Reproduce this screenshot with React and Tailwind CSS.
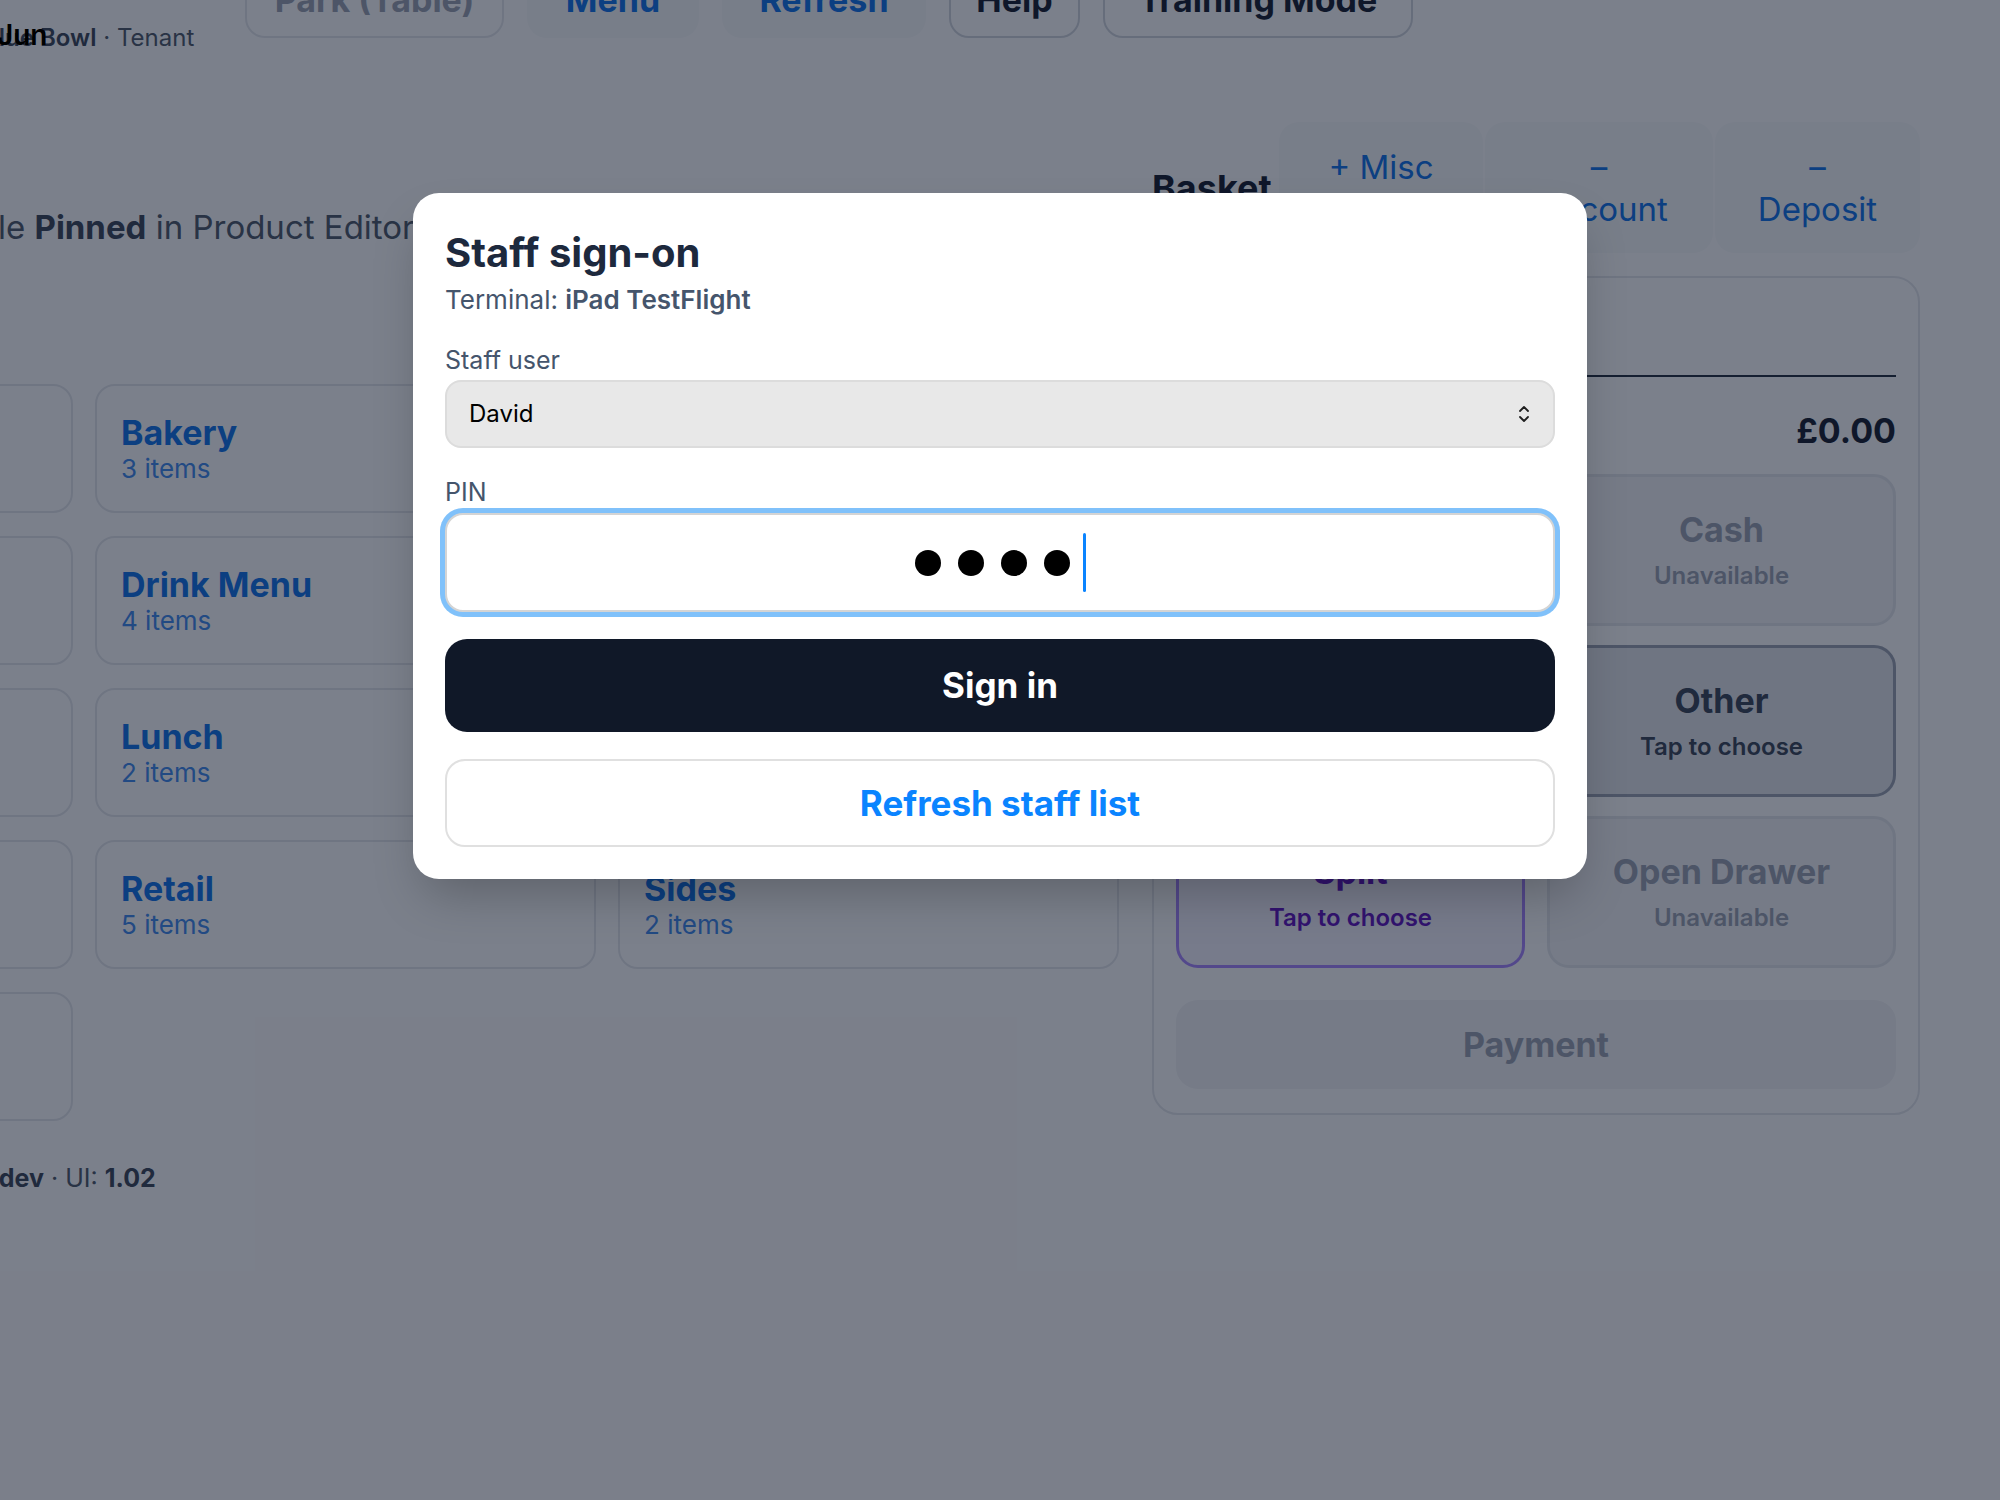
import { useState } from "react";

const categoryRows = [
  [{ name: "Specials", count: 2 }, { name: "Bakery", count: 3 }, { name: "Breakfast", count: 6 }],
  [{ name: "Coffee", count: 8 }, { name: "Drink Menu", count: 4 }, { name: "Hot Food", count: 5 }],
  [{ name: "Desserts", count: 3 }, { name: "Lunch", count: 2 }, { name: "Salads", count: 4 }],
  [{ name: "Kids", count: 3 }, { name: "Retail", count: 5 }, { name: "Sides", count: 2 }],
  [{ name: "Soft Drinks", count: 7 }],
];

function CategoryCard({ name, count }) {
  return (
    <div className="flex h-[129px] flex-col justify-center rounded-[20px] border-2 border-gray-200 bg-white px-6">
      <div className="text-[34px] font-bold leading-[38px] text-[#0a6fe8]">{name}</div>
      <div className="mt-0.5 text-[26px] leading-[30px] text-[#3b87ee]">{count} items</div>
    </div>
  );
}

function TenderTile({ title, sub, variant }) {
  const styles = {
    disabled: "border-gray-200 bg-gray-100 text-gray-400",
    active: "border-gray-400 bg-gray-200 text-gray-700",
    split: "border-violet-400 bg-violet-50 text-violet-800",
  };
  return (
    <div
      className={`flex h-[152px] flex-col items-center justify-center rounded-[22px] border-[3px] ${styles[variant]}`}
    >
      <div className="text-[34px] font-bold leading-[40px]">{title}</div>
      <div className="mt-3 text-[24px] font-semibold leading-[28px]">{sub}</div>
    </div>
  );
}

function ChevronUpDown() {
  return (
    <svg width="14" height="22" viewBox="0 0 14 22" fill="none" stroke="#1f1f1f" strokeWidth="1.8" strokeLinecap="round" strokeLinejoin="round">
      <path d="M3 8 L7 4 L11 8" />
      <path d="M3 14 L7 18 L11 14" />
    </svg>
  );
}

function StaffSignOn() {
  const [staff, setStaff] = useState("David");
  return (
    <div className="w-[1174px] rounded-[26px] bg-white px-8 pb-8 pt-[38px] shadow-2xl">
      <h2 className="text-[40px] font-bold leading-[44px] text-slate-800">Staff sign-on</h2>
      <p className="mt-2.5 text-[26px] leading-[30px] text-slate-600">
        Terminal: <span className="font-semibold">iPad TestFlight</span>
      </p>

      <label className="mt-[30px] block text-[25px] leading-[30px] text-slate-600">Staff user</label>
      <div className="relative mt-[5px]">
        <select
          value={staff}
          onChange={(e) => setStaff(e.target.value)}
          className="h-[68px] w-full appearance-none rounded-2xl border-2 border-[#dcdcdc] bg-[#e8e8e8] pl-[22px] text-[24px] text-black outline-none"
        >
          <option>David</option>
          <option>Sarah</option>
          <option>Tom</option>
        </select>
        <div className="pointer-events-none absolute right-[24px] top-[23px]">
          <ChevronUpDown />
        </div>
      </div>

      <label className="mt-[29px] block text-[25px] leading-[30px] text-slate-600">PIN</label>
      <div className="mt-[6px] flex h-[99px] items-center justify-center rounded-[18px] border-2 border-[#d4d4d4] bg-white ring-[5px] ring-[#80c1fa]">
        <div className="flex items-center gap-[17px]">
          <span className="h-[26px] w-[26px] rounded-full bg-black" />
          <span className="h-[26px] w-[26px] rounded-full bg-black" />
          <span className="h-[26px] w-[26px] rounded-full bg-black" />
          <span className="h-[26px] w-[26px] rounded-full bg-black" />
          <span className="ml-[-4px] h-[59px] w-[3px] rounded-full bg-[#0a84ff]" />
        </div>
      </div>

      <button className="mt-[27px] flex h-[93px] w-full items-center justify-center rounded-[22px] bg-gray-900 text-[35px] font-bold text-white">
        Sign in
      </button>
      <button className="mt-[27px] flex h-[88px] w-full items-center justify-center rounded-[20px] border-2 border-[#e0e0e0] bg-white text-[35px] font-bold text-[#0a84ff]">
        Refresh staff list
      </button>
    </div>
  );
}

export default function App() {
  const topButtons = [
    { label: "Park (Table)", w: "w-[259px]", cls: "border-2 border-gray-200 bg-white text-gray-400" },
    { label: "Menu", w: "w-[172px]", cls: "border-2 border-transparent bg-gray-50 text-[#0a6fe8]" },
    { label: "Refresh", w: "w-[204px]", cls: "border-2 border-transparent bg-gray-50 text-[#0a6fe8]" },
    { label: "Help", w: "w-[131px]", cls: "border-2 border-gray-300 bg-white text-gray-900" },
    { label: "Training Mode", w: "w-[310px]", cls: "border-2 border-gray-300 bg-white text-gray-900" },
  ];

  return (
    <div className="relative h-[1500px] w-[2000px] overflow-hidden bg-white font-['Inter',sans-serif]">
      {/* page under the dialog */}
      <div className="-mt-[56px] flex h-[94px] items-start gap-[23px]">
        <div className="mt-[79px] w-[222px]">
          <div className="-ml-[17px] whitespace-nowrap text-[24px] leading-[30px] text-gray-600">
            <span className="font-semibold text-gray-700">Blue Bowl</span> · Tenant
          </div>
        </div>
        {topButtons.map((b) => (
          <div
            key={b.label}
            className={`flex h-[94px] items-center justify-center rounded-[20px] pt-[17px] text-[34px] font-bold ${b.w} ${b.cls}`}
          >
            {b.label}
          </div>
        ))}
      </div>

      <div className="-ml-[428px] mt-[84px] flex gap-[33px]">
        <div className="w-[1547px] shrink-0">
          <p className="ml-[347px] mt-[85px] whitespace-nowrap text-[33px] leading-[40px] text-gray-600">
            Toggle <span className="font-bold text-gray-700">Pinned</span> in Product Editor to show categories here
          </p>
          <div className="mt-[137px] grid grid-cols-3 gap-x-[22px] gap-y-[23px]">
            {categoryRows.flat().map((c) => (
              <CategoryCard key={c.name} name={c.name} count={c.count} />
            ))}
          </div>
          <p className="ml-[354px] mt-[42px] whitespace-nowrap text-[25px] leading-[30px] text-gray-600">
            Build: <span className="font-bold text-gray-700">dev</span> · UI: <span className="font-bold text-gray-700">1.02</span>
          </p>
        </div>

        <div className="w-[768px] shrink-0">
          <div className="flex items-center justify-between">
            <h3 className="text-[36px] font-bold text-gray-900">Basket</h3>
            <div className="flex w-[641px] gap-[2px]">
              <div className="flex h-[131px] w-[204px] flex-col items-center rounded-[20px] bg-gray-50 pt-6 text-[33px] leading-[42px] text-[#0a6fe8]">
                + Misc
              </div>
              <div className="flex h-[131px] w-[228px] flex-col items-center rounded-[20px] bg-gray-50 pt-6 text-[33px] leading-[42px] text-[#0a6fe8]">
                <span>–</span>
                <span>Discount</span>
              </div>
              <div className="flex h-[131px] w-[205px] flex-col items-center rounded-[20px] bg-gray-50 pt-6 text-[33px] leading-[42px] text-[#0a6fe8]">
                <span>–</span>
                <span>Deposit</span>
              </div>
            </div>
          </div>

          <div className="mt-[23px] rounded-[26px] border-2 border-gray-200 bg-white px-[22px] pb-[24px] pt-[22px]">
            <div className="flex h-[77px] items-center border-b-2 border-gray-800 text-[24px] text-gray-500">
              No items yet
            </div>
            <div className="mt-[33px] flex items-center justify-between text-[34px] font-bold leading-[42px] text-gray-900">
              <span className="text-gray-700">Total</span>
              <span>£0.00</span>
            </div>
            <div className="mt-[22px] grid grid-cols-2 gap-x-[22px] gap-y-[19px]">
              <TenderTile title="Card" sub="Unavailable" variant="disabled" />
              <TenderTile title="Cash" sub="Unavailable" variant="disabled" />
              <TenderTile title="Voucher" sub="Tap to choose" variant="active" />
              <TenderTile title="Other" sub="Tap to choose" variant="active" />
              <TenderTile title="Split" sub="Tap to choose" variant="split" />
              <TenderTile title="Open Drawer" sub="Unavailable" variant="disabled" />
            </div>
            <div className="mt-[32px] flex h-[89px] items-center justify-center rounded-[22px] bg-gray-100 text-[34px] font-bold text-gray-400">
              Payment
            </div>
          </div>
        </div>
      </div>

      {/* dialog backdrop */}
      <div className="absolute inset-0 flex items-start justify-center bg-slate-900/55 pt-[193px]">
        <StaffSignOn />
      </div>

      {/* status bar text sitting above the dim layer */}
      <div className="absolute left-[-3px] top-[20px] text-[28px] font-semibold leading-[30px] text-black">Jun</div>
    </div>
  );
}
